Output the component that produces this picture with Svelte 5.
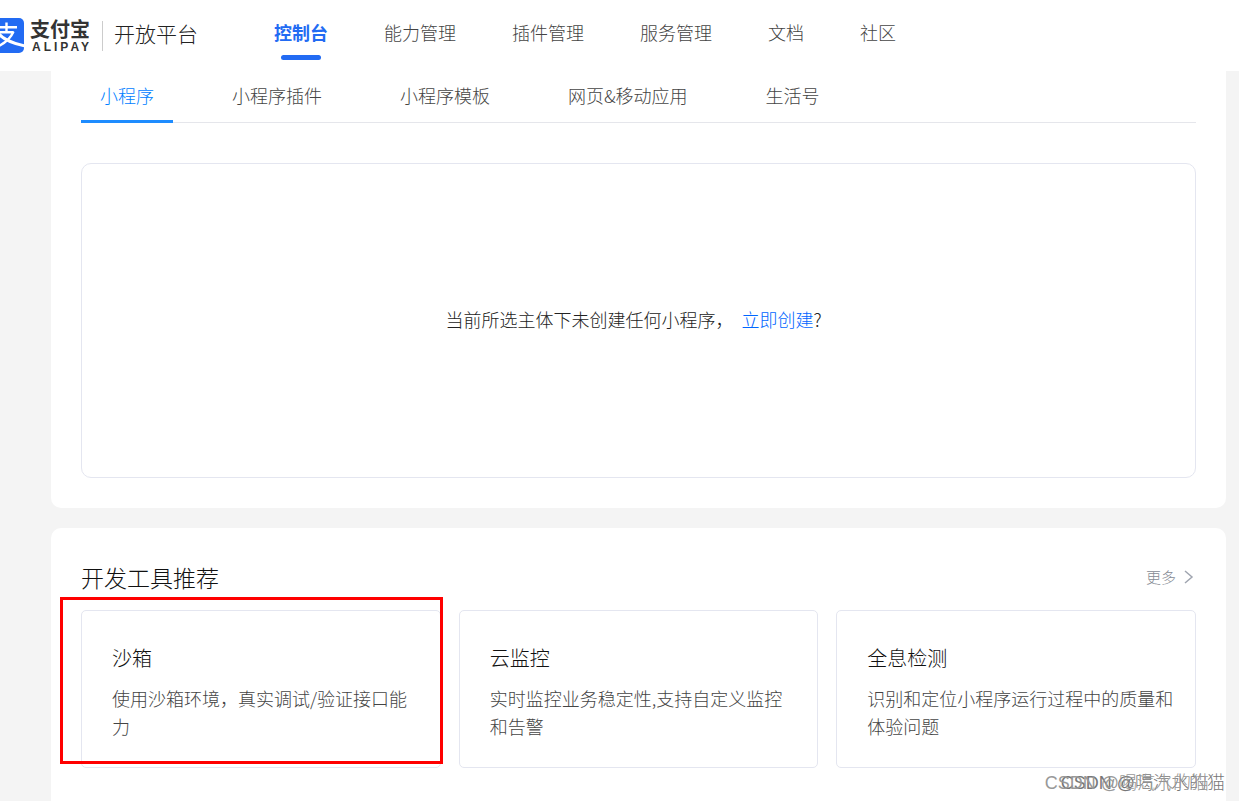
<script lang="ts">
	const navItems = ['控制台', '能力管理', '插件管理', '服务管理', '文档', '社区'];
	const tabs = ['小程序', '小程序插件', '小程序模板', '网页&移动应用', '生活号'];

	const tools = [
		{ name: '沙箱', desc: '使用沙箱环境，真实调试/验证接口能力', marked: true },
		{ name: '云监控', desc: '实时监控业务稳定性,支持自定义监控和告警', marked: false },
		{ name: '全息检测', desc: '识别和定位小程序运行过程中的质量和体验问题', marked: false }
	];

	let activeNav = $state(0);
	let activeTab = $state(0);
</script>

<div class="page">
	<header class="header">
		<a class="logo" href="#home">
			<svg class="logo-icon" viewBox="0 0 35 35" aria-hidden="true">
				<rect width="35" height="35" rx="5" fill="#226bf3" />
				<g fill="none" stroke="#fff" stroke-width="2.4">
					<path d="M7 9.300h21M17.500 4.500v10M9 14.300h15.500" />
					<path d="M24.500 13.500c-2.500 6-7 11-16 15" />
					<path d="M10 16c4 5 12 9 26 12" stroke-width="3" />
				</g>
			</svg>
			<span class="logo-name">
				<span class="logo-cn">支付宝</span>
				<span class="logo-en">ALIPAY</span>
			</span>
			<span class="logo-platform">开放平台</span>
		</a>

		<nav class="nav">
			{#each navItems as item, i}
				<a
					class="nav-item"
					class:active={activeNav === i}
					href="#nav-{i}"
					onclick={() => (activeNav = i)}>{item}</a
				>
			{/each}
		</nav>
	</header>

	<main class="content">
		<section class="panel apps">
			<div class="tabs" role="tablist">
				{#each tabs as tab, i}
					<button
						class="tab"
						class:active={activeTab === i}
						role="tab"
						aria-selected={activeTab === i}
						onclick={() => (activeTab = i)}>{tab}</button
					>
				{/each}
			</div>
			<div class="empty">
				<span>当前所选主体下未创建任何小程序，</span>
				<span><a href="#create">立即创建</a>?</span>
			</div>
		</section>

		<section class="panel tools">
			<div class="tools-head">
				<h2>开发工具推荐</h2>
				<a class="more" href="#more">
					更多
					<svg viewBox="0 0 10 14" aria-hidden="true">
						<path d="M1 1l7 6-7 6" fill="none" stroke="#a0a5b0" stroke-width="1.5" />
					</svg>
				</a>
			</div>
			<div class="cards">
				{#each tools as tool}
					<article class="card" class:marked={tool.marked}>
						<h3>{tool.name}</h3>
						<p>{tool.desc}</p>
					</article>
				{/each}
			</div>
		</section>
	</main>

	<div class="watermark">
		<span class="ghost">CSDN @喝汽水的猫</span>
		<span>CSDN @喝汽水的猫</span>
	</div>
</div>

<style>
	:global(body) {
		margin: 0;
		background: #f4f4f4;
		font-family: 'Noto Sans CJK SC', 'Liberation Sans', sans-serif;
		font-weight: 300;
		color: #222;
	}

	.page {
		position: relative;
		height: 100vh;
		overflow: hidden;
		font-size: 18px;
		line-height: 28px;
	}

	a {
		color: inherit;
		text-decoration: none;
	}

	.header {
		display: flex;
		align-items: flex-start;
		gap: 76px;
		height: 71px;
		background: #fff;
	}

	.logo {
		display: flex;
		align-items: center;
		height: 71px;
		margin-left: -11px;
	}

	.logo-icon {
		width: 35px;
		height: 35px;
		margin-right: 6px;
	}

	.logo-name {
		display: flex;
		flex-direction: column;
		padding-right: 10px;
		color: #333;
	}

	.logo-cn {
		font-size: 20px;
		line-height: 22px;
		font-weight: 700;
	}

	.logo-en {
		font-family: 'Liberation Sans', sans-serif;
		font-size: 12px;
		line-height: 14px;
		font-weight: 700;
		letter-spacing: 3px;
		padding-left: 2px;
	}

	.logo-platform {
		padding: 0 0 6px 11px;
		border-left: 1px solid #ccc;
		font-size: 21px;
		line-height: 24px;
	}

	.nav {
		display: flex;
		gap: 56px;
		padding-top: 18px;
	}

	.nav-item {
		display: flex;
		flex-direction: column;
		align-items: center;
		color: #444;
	}

	.nav-item.active {
		color: #226bf3;
		font-weight: 700;
	}

	.nav-item.active::after {
		content: '';
		width: 40px;
		height: 5px;
		margin-top: 9px;
		border-radius: 3px;
		background: #226bf3;
	}

	.content {
		display: flex;
		flex-direction: column;
		gap: 20px;
		padding: 0 13px 0 51px;
	}

	.panel {
		padding: 0 30px 30px;
		background: #fff;
		border-radius: 10px;
	}

	.apps {
		border-radius: 0 0 10px 10px;
	}

	.tabs {
		display: flex;
		gap: 40px;
		border-bottom: 1px solid #e5e6eb;
	}

	.tab {
		margin-bottom: -1px;
		padding: 10px 19px 11px;
		border: 0;
		border-bottom: 3px solid transparent;
		background: none;
		font: inherit;
		color: #444;
		cursor: pointer;
	}

	.tab.active {
		color: #0080ff;
		border-color: #1e8cff;
	}

	.empty {
		display: flex;
		align-items: center;
		justify-content: center;
		gap: 8px;
		height: 309px;
		margin-top: 40px;
		padding: 0 10px 4px 0;
		border: 1px solid #e4e6f0;
		border-radius: 10px;
	}

	.empty a {
		color: #0066ff;
	}

	.tools {
		padding-top: 34px;
		padding-bottom: 48px;
	}

	.tools-head {
		display: flex;
		align-items: center;
		justify-content: space-between;
		margin-bottom: 18px;
	}

	h2,
	h3,
	p {
		margin: 0;
		font-weight: inherit;
	}

	h2 {
		font-size: 23px;
		line-height: 30px;
		color: #111;
	}

	.more {
		display: flex;
		align-items: center;
		gap: 8px;
		padding-right: 2px;
		font-size: 15px;
		color: #858a94;
	}

	.more svg {
		width: 10px;
		height: 14px;
	}

	.cards {
		display: grid;
		grid-template-columns: repeat(3, 1fr);
		gap: 18px;
	}

	.card {
		position: relative;
		padding: 33px 20px 27px 30px;
		border: 1px solid #e4e6f0;
		border-radius: 5px;
	}

	/* highlight frame over the sandbox card */
	.card.marked::after {
		content: '';
		position: absolute;
		inset: -14px -3px 3px -22px;
		border: 3px solid #f00;
	}

	h3 {
		margin-bottom: 12px;
		font-size: 20px;
		line-height: 28px;
		color: #111;
	}

	p {
		color: #444;
	}

	.watermark {
		position: absolute;
		right: 14px;
		bottom: 4px;
		font-family: 'Liberation Sans', 'Noto Sans CJK SC', sans-serif;
		color: #777;
		white-space: nowrap;
	}

	.ghost {
		position: absolute;
		top: 0;
		right: 16px;
		color: #999;
	}
</style>
